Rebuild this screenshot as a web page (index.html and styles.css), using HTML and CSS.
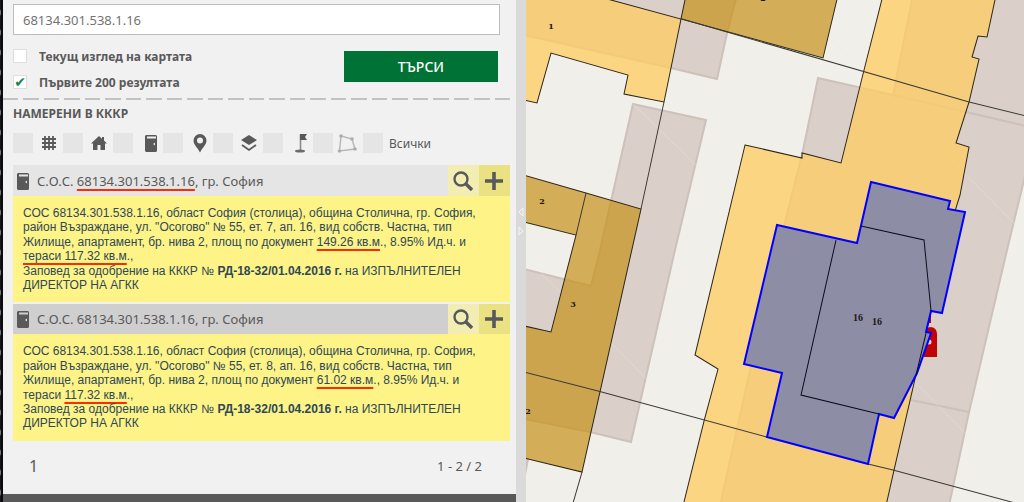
FILE: index.html
```html
<!DOCTYPE html>
<html lang="bg">
<head>
    <meta charset="UTF-8">
    <meta name="viewport" content="width=device-width, initial-scale=1.0">
    <title>КККР - Търсене</title>
    <link rel="stylesheet" href="styles.css">
</head>
<body>

<!-- Shared icons -->
<svg class="icon-defs" width="0" height="0">
    <symbol id="icon-door" viewBox="0 0 12 18">
        <path d="M2 1h9l1 1v15l-1 1H1l-1-1V2l1-1zM2 2.500v2h9v-2z" fill="#595959" fill-rule="evenodd"/>
        <path d="M8 10l2-1.500v3z" fill="#e5e5e5"/>
    </symbol>
    <symbol id="icon-search" viewBox="0 0 20 20">
        <circle cx="8" cy="8" r="6.500" fill="none" stroke="#595959" stroke-width="2.400"/>
        <path d="M13 13l6 6" stroke="#595959" stroke-width="3.400"/>
    </symbol>
    <symbol id="icon-plus" viewBox="0 0 20 20">
        <path d="M10 1v18M1 10h18" stroke="#595959" stroke-width="3.600"/>
    </symbol>
</svg>

<div class="page">
    <div class="edge"></div>

    <div class="panel">
        <form class="search-form" onsubmit="return false">
            <input type="text" class="search-input" value="68134.301.538.1.16" aria-label="Търсене">
            <div class="search-options">
                <div class="checks">
                    <label><input type="checkbox"> Текущ изглед на картата</label>
                    <label><input type="checkbox" checked> Първите 200 резултата</label>
                </div>
                <button type="submit" class="search-button">ТЪРСИ</button>
            </div>
        </form>

        <div class="dashes"></div>
        <h2>НАМЕРЕНИ В КККР</h2>

        <div class="filters">
            <label><input type="checkbox" aria-label="Парцели">
                <svg width="16" height="16" viewBox="0 0 16 16"><path d="M4 1v14M8 1v14M12 1v14M1 4h14M1 8h14M1 12h14" stroke="#595959" stroke-width="1.800"/></svg>
            </label>
            <label><input type="checkbox" aria-label="Сгради">
                <svg width="16" height="16" viewBox="0 0 16 16"><path d="M8 1L0 8.500h2V15h4.500v-5h3v5H14V8.500h2L13 5.600V2h-2v1.800z" fill="#595959"/></svg>
            </label>
            <label><input type="checkbox" aria-label="Обекти">
                <svg width="12" height="18"><use href="#icon-door"/></svg>
            </label>
            <label><input type="checkbox" aria-label="Адреси">
                <svg width="14" height="20" viewBox="0 0 14 20"><path d="M7 1a6.500 6.500 0 0 0-6.500 6.500C.5 12 5 15 7 19.500 9 15 13.500 12 13.500 7.500A6.500 6.500 0 0 0 7 1zm0 3.500a3 3 0 1 1 0 6 3 3 0 0 1 0-6z" fill="#595959" fill-rule="evenodd"/></svg>
            </label>
            <label><input type="checkbox" aria-label="Слоеве">
                <svg width="16" height="18" viewBox="0 0 16 18"><path d="M8 1l8 5-8 5-8-5z" fill="#595959"/><path d="M1 11l7 5 7-5" fill="none" stroke="#595959" stroke-width="1.800"/></svg>
            </label>
            <label><input type="checkbox" aria-label="Точки">
                <svg width="12" height="20" viewBox="0 0 12 20"><path d="M5.500 1v17" stroke="#8a8a8a" stroke-width="1.600"/><path d="M5 1h7l-2 3 2 3H5z" fill="#595959"/><ellipse cx="5" cy="18" rx="5" ry="1.500" fill="#6b6b6b"/></svg>
            </label>
            <label><input type="checkbox" aria-label="Контури">
                <svg width="20" height="20" viewBox="0 0 20 20"><path d="M4 3l11 3 3 10L2.500 18z" fill="none" stroke="#b8b8b8" stroke-width="1.500"/><g fill="#adadad"><circle cx="4" cy="3" r="1.800"/><circle cx="15" cy="6" r="1.800"/><circle cx="18" cy="16" r="1.800"/><circle cx="2.500" cy="18" r="1.800"/></g></svg>
            </label>
            <label><input type="checkbox"> <span>Всички</span></label>
        </div>

        <div class="results">
            <div class="result">
                <div class="result-header">
                    <svg width="12" height="18"><use href="#icon-door"/></svg>
                    <h3>С.О.С. <span class="marked">68134.301.538.1.16</span>, гр. София</h3>
                    <button type="button" class="zoom" aria-label="Покажи"><svg width="20" height="20"><use href="#icon-search"/></svg></button>
                    <button type="button" class="add" aria-label="Добави"><svg width="20" height="20"><use href="#icon-plus"/></svg></button>
                </div>
                <p>СОС 68134.301.538.1.16, област София (столица), община Столична, гр. София, район Възраждане, ул. "Осогово" № 55, ет. 7, ап. 16, вид собств. Частна, тип Жилище, апартамент, бр. нива 2, площ по документ <span class="marked">149.26 кв.м</span>., 8.95% Ид.ч. и <span class="marked">тераси 117.32 кв.м</span>.,<br>
                Заповед за одобрение на КККР № <b>РД-18-32/01.04.2016 г.</b> на ИЗПЪЛНИТЕЛЕН ДИРЕКТОР НА АГКК</p>
            </div>
            <div class="result active">
                <div class="result-header">
                    <svg width="12" height="18"><use href="#icon-door"/></svg>
                    <h3>С.О.С. 68134.301.538.1.16, гр. София</h3>
                    <button type="button" class="zoom" aria-label="Покажи"><svg width="20" height="20"><use href="#icon-search"/></svg></button>
                    <button type="button" class="add" aria-label="Добави"><svg width="20" height="20"><use href="#icon-plus"/></svg></button>
                </div>
                <p>СОС 68134.301.538.1.16, област София (столица), община Столична, гр. София, район Възраждане, ул. "Осогово" № 55, ет. 8, ап. 16, вид собств. Частна, тип Жилище, апартамент, бр. нива 2, площ по документ <span class="marked">61.02 кв.м</span>., 8.95% Ид.ч. и тераси <span class="marked">117.32 кв.м</span>.,<br>
                Заповед за одобрение на КККР № <b>РД-18-32/01.04.2016 г.</b> на ИЗПЪЛНИТЕЛЕН ДИРЕКТОР НА АГКК</p>
            </div>
        </div>

        <div class="pager">
            <a href="#">1</a>
            <span>1 - 2 / 2</span>
        </div>
        <div class="bottom-bar"></div>
    </div>

    <div class="splitter">
        <svg width="6" height="32" viewBox="0 0 6 32"><path d="M5 4v8L1 8zM1 23v8l4-4z" fill="none" stroke="#f5f5f5"/></svg>
    </div>

    <div class="map">
        <svg viewBox="526 0 498 502" preserveAspectRatio="xMinYMin slice">
            <!-- base map buildings -->
            <g class="base">
                <path d="M520 -5H737L727 33L717 79L671 68L520 34z"/>
                <path d="M633 104L706 120L675 250L631 442L590 432L520 418V268L591 286L600 250z"/>
                <path d="M520 455L528 459L522 490z"/>
                <path d="M913 -5H1030V127L893 95z"/>
                <path d="M818 78L893 95L1030 127V155L1007 250L969 412L948 510H719L749 375L785 222L802 155z"/>
                <path d="M911 400L969 412"/>
            </g>
            <path class="scratch" d="M633 104L732 200M540 272L700 432M832 40L1024 233M916 383L1024 493"/>

            <!-- address marker -->
            <path d="M926 316h5v7h-5zM924 334q0-7 7-7q6 1 6 7v23h-13z" fill="#c00404"/>
            <circle cx="929" cy="342" r="2.500" fill="#e8d8d4"/>

            <!-- cadastre buildings -->
            <path class="light" d="M520 -5H592L611 0L681 19L664 102L624 94L628 75L551 53L537 103L520 99z"/>
            <path class="light" d="M745 145L802 158V153L841 163L864 70L883 -5H996L987 37L978 36L972 57L979 59L969 102L956 143L969 147L960 195L955 211L931 311L914 383L894 470L885 510H682L704 421L718 369L695 355L720 250z"/>
            <path class="dark" d="M686 -5L681 19L823 58L838 -5z"/>
            <path class="dark" d="M520 174L586 193L641 209L582 472L520 457V325L551 332L576 235L520 221z"/>
            <path class="parcel" d="M586 193L576 235M682 19L969 102L1030 117M664 102L641 209M582 472L571 510M520 371L598 391L767 437M868 464L893 470L1030 507"/>

            <!-- selected objects -->
            <path class="selected" d="M777 225L744 364L782 373L767 437L868 464L879 414L894 418L917 373L931 333L926 332L931 311L942 313L965 212L948 209L950 201L871 182L857 243z"/>
            <path class="inner" d="M861 226L924 240L931 311M836 240L801 395L879 414M926 333L916 375"/>

            <g class="labels">
                <text x="551" y="29">1</text>
                <text x="763" y="1">2</text>
                <text x="542" y="204">2</text>
                <text x="573" y="307">3</text>
                <text x="528" y="414">2</text>
                <text x="858" y="321" class="big">16</text>
                <text x="877" y="325" class="big">16</text>
            </g>
        </svg>
    </div>
</div>

</body>
</html>
```
FILE: styles.css
```css
* {
    margin: 0;
    padding: 0;
    box-sizing: border-box;
}

body {
    font-family: "Noto Sans", "Open Sans", sans-serif;
    font-size: 13px;
    color: #595959;
    background: #f1f1f1;
}

.icon-defs {
    position: absolute;
}

.page {
    display: grid;
    grid-template-columns: 3px 103fr 10px 100fr;
    height: 100vh;
    overflow: hidden;
}

.edge {
    background: repeating-linear-gradient(#131318 0 9px, #77777c 11px 14px, #131318 16px 20px);
    border-right: 2px solid #0a0a10;
}

.panel {
    display: flex;
    flex-direction: column;
    min-width: 0;
    background: #f1f1f1;
}

.search-form {
    padding: 4px 16px 3px 10px;
}

.search-input {
    display: block;
    width: 100%;
    height: 31px;
    padding: 0 9px;
    border: 1px solid #bdbdbd;
    background: #fff;
    font: inherit;
    color: #737373;
}

.search-options {
    display: flex;
    justify-content: space-between;
    align-items: flex-start;
    padding: 8px 2px 0 0;
}

.checks label {
    display: flex;
    align-items: center;
    gap: 12px;
    height: 26px;
    font-size: 12px;
    font-weight: bold;
}

input[type="checkbox"] {
    appearance: none;
    flex: none;
}

.checks input {
    width: 14px;
    height: 14px;
    border: 1px solid #dedede;
    background: #fff;
}

.checks input:checked::before {
    content: "✔";
    display: block;
    font: 14px/12px "DejaVu Sans", sans-serif;
    color: #13884a;
    text-align: center;
}

.search-button {
    width: 154px;
    height: 31px;
    margin-top: 8px;
    border: none;
    background: #007236;
    color: #fff;
    font: 500 14px "Noto Sans", "Open Sans", sans-serif;
    cursor: pointer;
}

.dashes {
    height: 2px;
    margin: 0 5px 5px 0;
    background: repeating-linear-gradient(90deg, #c2c2c2 0 15px, transparent 15px 20px, #c2c2c2 20px 36px, transparent 36px 41px);
}

h2 {
    padding-left: 10px;
    font-size: 12px;
    line-height: 17px;
}

.filters {
    display: flex;
    padding: 11px 0 12px 10px;
}

.filters label {
    display: flex;
    align-items: center;
    flex: 0 0 50px;
    height: 20px;
}

.filters input {
    width: 20px;
    height: 20px;
    background: #e5e5e5;
}

.filters svg {
    margin: 0 6px 0 auto;
}

.filters span {
    padding-left: 6px;
    font-size: 12px;
}

.results {
    padding: 0 6px 0 10px;
}

.result {
    margin-bottom: 2px;
    background: #fdf386;
}

.result-header {
    display: flex;
    align-items: center;
    height: 31px;
    padding-left: 4px;
    background: #e5e5e5;
}

.result.active .result-header {
    height: 30px;
    background: #cfcfcf;
}

.result-header h3 {
    flex: 1;
    padding-left: 8px;
    font-size: 13px;
    font-weight: normal;
}

.result-header button {
    display: flex;
    align-items: center;
    justify-content: center;
    width: 31px;
    height: 100%;
    border: none;
    cursor: pointer;
}

.zoom {
    background: #f2edb3;
}

.add {
    background: #eae282;
}

.result p {
    padding: 10px;
    font-family: "Liberation Sans", Arial, sans-serif;
    font-size: 12px;
    line-height: 1.2;
    color: #2f4858;
}

.marked {
    text-decoration: underline 2px #fb2c0b;
    text-underline-offset: 3px;
    text-decoration-skip-ink: none;
}

.pager {
    display: flex;
    flex: 1;
    justify-content: space-between;
    align-items: center;
    padding: 0 34px 4px 26px;
}

.pager a {
    font-size: 16px;
    color: #595959;
    text-decoration: none;
}

.bottom-bar {
    height: 8px;
    background: #595959;
}

.splitter {
    display: flex;
    justify-content: center;
    padding-top: 204px;
    background: #dadada;
}

.map {
    min-width: 0;
    overflow: hidden;
    background: #f0efea;
}

.map svg {
    display: block;
    width: 100%;
    height: 100%;
}

.base path {
    fill: #dacfc9;
    stroke: #cdc1b9;
    stroke-width: 2;
}

.scratch {
    fill: none;
    stroke: #f6efe6;
    stroke-opacity: 0.3;
}

.light {
    fill: rgba(255, 204, 95, 0.75);
    stroke: #2b2618;
}

.dark {
    fill: rgba(200, 146, 26, 0.7);
    stroke: #2b2618;
}

.parcel {
    fill: none;
    stroke: #3c3a36;
}

.selected {
    fill: #8e8da6;
    stroke: #0000ff;
    stroke-width: 2;
}

.inner {
    fill: none;
    stroke: #0d0d1c;
}

.labels text {
    font: bold 8px "DejaVu Serif", serif;
    text-anchor: middle;
    fill: #1c1a12;
}

.labels .big {
    font: bold 10px "Liberation Serif", serif;
}
```
